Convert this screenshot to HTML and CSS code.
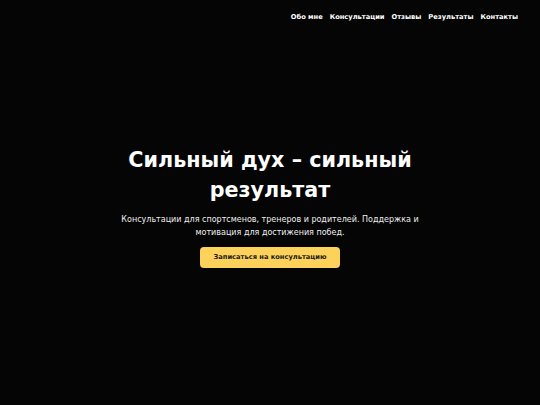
FILE: index.html
```
<!DOCTYPE html>
<html lang="ru">
<head>
<meta charset="utf-8">
<link rel="stylesheet" href="styles.css">
</head>
<body>
<header class="top">
  <nav class="nav">
    <a href="#">Обо мне</a>
    <a href="#">Консультации</a>
    <a href="#">Отзывы</a>
    <a href="#">Результаты</a>
    <a href="#">Контакты</a>
  </nav>
</header>
<main class="hero">
  <div class="hero-inner">
    <h1 class="title">Сильный дух – сильный результат</h1>
    <p class="lead">Консультации для спортсменов, тренеров и родителей. Поддержка и мотивация для достижения побед.</p>
    <a class="btn" href="#">Записаться на консультацию</a>
  </div>
</main>
</body>
</html>
```
FILE: styles.css
```
* { box-sizing: border-box; }
html, body { margin: 0; height: 100%; }
body {
  background: #050505;
  color: #fff;
  font-family: "DejaVu Sans", sans-serif;
  display: flex;
  flex-direction: column;
}
.top {
  display: flex;
  justify-content: flex-end;
  padding: 12px 22px 0 0;
}
.nav {
  display: flex;
  gap: 7px;
}
.nav a {
  color: #fff;
  text-decoration: none;
  font-weight: bold;
  font-size: 6.7px;
  line-height: 10px;
}
.hero {
  flex: 1;
  display: flex;
  justify-content: center;
  align-items: center;
}
.hero-inner {
  width: 304px;
  display: flex;
  flex-direction: column;
  align-items: center;
  text-align: center;
  margin-top: -14px;
}
.title {
  margin: 0;
  font-size: 20.7px;
  line-height: 30px;
  font-weight: bold;
}
.lead {
  margin: 8px 0 8px;
  font-size: 8px;
  line-height: 13px;
  color: #eee;
}
.btn {
  display: inline-block;
  background: #fdd25a;
  color: #1a1a1a;
  text-decoration: none;
  font-weight: bold;
  font-size: 6.7px;
  padding: 5px 14px;
  line-height: 11px;
  border-radius: 4px;
}
```
